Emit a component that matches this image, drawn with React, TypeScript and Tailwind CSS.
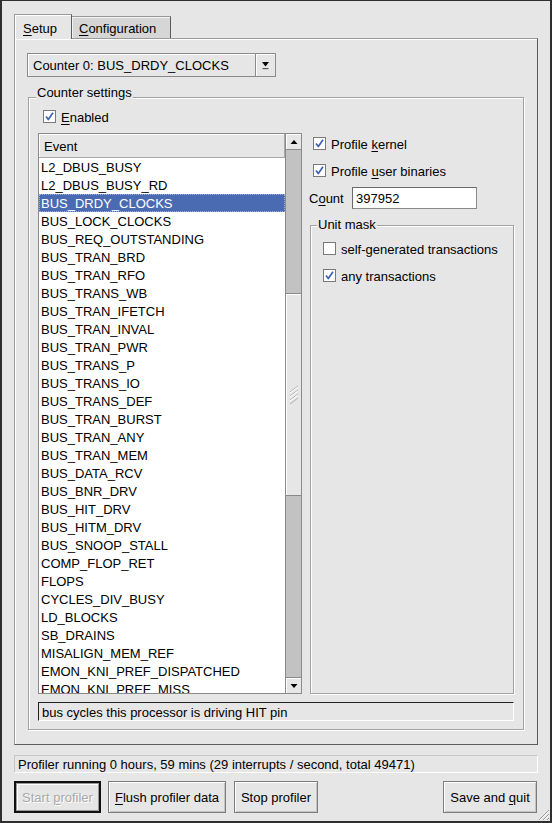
import React from "react";

const events = [
  "L2_DBUS_BUSY",
  "L2_DBUS_BUSY_RD",
  "BUS_DRDY_CLOCKS",
  "BUS_LOCK_CLOCKS",
  "BUS_REQ_OUTSTANDING",
  "BUS_TRAN_BRD",
  "BUS_TRAN_RFO",
  "BUS_TRANS_WB",
  "BUS_TRAN_IFETCH",
  "BUS_TRAN_INVAL",
  "BUS_TRAN_PWR",
  "BUS_TRANS_P",
  "BUS_TRANS_IO",
  "BUS_TRANS_DEF",
  "BUS_TRAN_BURST",
  "BUS_TRAN_ANY",
  "BUS_TRAN_MEM",
  "BUS_DATA_RCV",
  "BUS_BNR_DRV",
  "BUS_HIT_DRV",
  "BUS_HITM_DRV",
  "BUS_SNOOP_STALL",
  "COMP_FLOP_RET",
  "FLOPS",
  "CYCLES_DIV_BUSY",
  "LD_BLOCKS",
  "SB_DRAINS",
  "MISALIGN_MEM_REF",
  "EMON_KNI_PREF_DISPATCHED",
  "EMON_KNI_PREF_MISS",
];

function Check({ checked }: { checked: boolean }) {
  return (
    <span className="w-[13px] h-[13px] bg-white border border-[#7a7a7a] flex items-center justify-center shrink-0">
      {checked && (
        <svg width="11" height="11" viewBox="0 0 11 11">
          <path d="M2 5.5 L4.3 8.5 L9 1.8" stroke="#3d62b3" strokeWidth="1.7" fill="none" strokeLinejoin="round" />
        </svg>
      )}
    </span>
  );
}

function U({ children }: { children: React.ReactNode }) {
  return <span className="underline underline-offset-[2px]">{children}</span>;
}

function Btn({ children, w }: { children: React.ReactNode; w: string }) {
  return (
    <div
      className={`${w} h-[32px] border border-[#7c7c7c] bg-[#e6e6e6] shadow-[inset_1px_1px_0_#ffffff,inset_-1px_-1px_0_#c4c4c4] flex items-center justify-center whitespace-nowrap`}
    >
      <span>{children}</span>
    </div>
  );
}

export default function App() {
  return (
    <div className="relative w-[552px] h-[823px] bg-[#e6e6e6] border-l-2 border-t border-r-2 border-b-2 border-[#2e2e2e] flex flex-col pl-[12px] pr-[12px] pt-[13px] text-black text-[13px] leading-[15px] [font-family:'Liberation_Sans',Arial,sans-serif]">
      {/* Notebook */}
      <div className="flex flex-col">
        <div className="flex h-[24px] items-start">
          <div className="relative z-10 w-[58px] h-[25px] border-l border-t border-r border-l-[#9a9a9a] border-t-[#9a9a9a] border-r-[#5c5c5c] bg-[#e6e6e6] shadow-[inset_1px_1px_0_#ffffff] pl-[8px] pt-[6px]">
            <U>S</U>etup
          </div>
          <div className="mt-[2px] w-[99px] h-[22px] border-t border-r border-t-[#9a9a9a] border-r-[#5c5c5c] bg-[#d6d6d6] shadow-[inset_1px_1px_0_#f2f2f2] pl-[7px] pt-[4px]">
            <U>C</U>onfiguration
          </div>
        </div>
        <div className="h-[707px] border border-l-[#9a9a9a] border-t-[#9a9a9a] border-r-[#5c5c5c] border-b-[#5c5c5c] shadow-[inset_1px_1px_0_#ffffff] pl-[12px] pt-[14px]">
          {/* Option menu */}
          <div className="w-[249px] h-[24px] border border-[#8a8a8a] bg-[#e6e6e6] shadow-[inset_1px_1px_0_#ffffff] flex items-center">
            <div className="flex-1 pl-[5px] pt-[1px] whitespace-nowrap">Counter 0: BUS_DRDY_CLOCKS</div>
            <div className="w-[20px] h-full border-l border-[#8a8a8a] shadow-[inset_1px_0_0_#ffffff] flex items-center justify-center">
              <svg width="9" height="12" viewBox="0 0 9 12">
                <path d="M1 3 L8 3 L4.5 7.5 Z" fill="#000" />
                <rect x="1.5" y="9" width="6" height="1.2" fill="#555" />
              </svg>
            </div>
          </div>

          {/* Counter settings frame */}
          <div className="relative mt-[20px] ml-[1px] w-[496px] h-[633px] border border-[#a2a2a2] shadow-[1px_1px_0_#ffffff,inset_1px_1px_0_#ffffff]">
            <span className="absolute left-[7px] top-[-13px] px-[1px] bg-[#e6e6e6] leading-[15px] whitespace-nowrap">
              Counter settings
            </span>
            <div className="mt-[12px] ml-[14px] h-[13px] flex items-center gap-[5px]">
              <Check checked />
              <span className="pt-[1px]">
                <U>E</U>nabled
              </span>
            </div>
            <div className="mt-[10px] ml-[9px] flex">
              {/* List */}
              <div className="w-[264px] h-[561px] border border-[#8a8a8a] flex bg-white">
                <div className="w-[246px] flex flex-col overflow-hidden">
                  <div className="h-[24px] shrink-0 bg-[#e6e6e6] border-b border-r border-[#a8a8a8] shadow-[inset_1px_1px_0_#ffffff] flex items-center pl-[5px] pt-[1px]">
                    Event
                  </div>
                  {events.map((e, i) => (
                    <div
                      key={e}
                      className={`h-[18px] shrink-0 leading-[17px] pt-[1px] pl-[2px] whitespace-nowrap ${
                        i === 2
                          ? "bg-[#4a6bb1] text-white outline-1 outline-dotted outline-[#9fb1dc] -outline-offset-1"
                          : ""
                      }`}
                    >
                      {e}
                    </div>
                  ))}
                </div>
                <div className="w-[16px] flex flex-col border-l border-[#8a8a8a] bg-[#c2c2c2]">
                  <div className="h-[16px] shrink-0 bg-[#e6e6e6] border-b border-[#8a8a8a] shadow-[inset_1px_1px_0_#ffffff] flex items-center justify-center">
                    <svg width="8" height="6" viewBox="0 0 8 6">
                      <path d="M0.5 5 L7.5 5 L4 1 Z" fill="#000" />
                    </svg>
                  </div>
                  <div className="flex-1 flex flex-col">
                    <div className="h-[143px] shrink-0" />
                    <div className="h-[203px] shrink-0 bg-[#e6e6e6] border-t border-b border-[#8a8a8a] shadow-[inset_1px_1px_0_#ffffff] flex items-center justify-center">
                      <svg width="10" height="20" viewBox="0 0 10 20">
                        <path d="M1 7 L9 1 M1 11 L9 5 M1 15 L9 9 M1 19 L9 13" stroke="#b0b0b0" strokeWidth="1" />
                        <path d="M1 8 L9 2 M1 12 L9 6 M1 16 L9 10" stroke="#ffffff" strokeWidth="1" />
                      </svg>
                    </div>
                    <div className="flex-1" />
                  </div>
                  <div className="h-[16px] shrink-0 bg-[#e6e6e6] border-t border-[#8a8a8a] shadow-[inset_1px_1px_0_#ffffff] flex items-center justify-center">
                    <svg width="8" height="6" viewBox="0 0 8 6">
                      <path d="M0.5 1 L7.5 1 L4 5 Z" fill="#000" />
                    </svg>
                  </div>
                </div>
              </div>

              {/* Right column */}
              <div className="ml-[7px] w-[205px] flex flex-col">
                <div className="mt-[4px] ml-[4px] h-[13px] flex items-center gap-[5px]">
                  <Check checked />
                  <span className="whitespace-nowrap pt-[1px]">
                    Profile <U>k</U>ernel
                  </span>
                </div>
                <div className="mt-[14px] ml-[4px] h-[13px] flex items-center gap-[5px]">
                  <Check checked />
                  <span className="whitespace-nowrap pt-[1px]">
                    Profile <U>u</U>ser binaries
                  </span>
                </div>
                <div className="mt-[10px] h-[22px] flex items-center">
                  <span className="w-[43px] pt-[1px]">
                    C<U>o</U>unt
                  </span>
                  <div className="w-[125px] h-[22px] bg-white border border-[#8a8a8a] border-t-[#6a6a6a] border-l-[#6a6a6a] flex items-center pl-[3px] pt-[1px]">
                    397952
                  </div>
                </div>
                <div className="relative mt-[16px] ml-[1px] w-[204px] h-[469px] border border-[#a2a2a2] shadow-[1px_1px_0_#ffffff,inset_1px_1px_0_#ffffff]">
                  <span className="absolute left-[6px] top-[-9px] px-[1px] bg-[#e6e6e6] leading-[15px] whitespace-nowrap">
                    Unit mask
                  </span>
                  <div className="mt-[16px] ml-[12px] h-[13px] flex items-center gap-[5px]">
                    <Check checked={false} />
                    <span className="whitespace-nowrap pt-[1px]">self-generated transactions</span>
                  </div>
                  <div className="mt-[14px] ml-[12px] h-[13px] flex items-center gap-[5px]">
                    <Check checked />
                    <span className="whitespace-nowrap pt-[1px]">any transactions</span>
                  </div>
                </div>
              </div>
            </div>
            {/* Description */}
            <div className="mt-[8px] ml-[9px] w-[476px] h-[19px] border border-t-[#222] border-l-[#222] border-r-white border-b-white flex items-center pl-[3px] pt-[1px] whitespace-nowrap">
              bus cycles this processor is driving HIT pin
            </div>
          </div>
        </div>
      </div>

      {/* Status bar */}
      <div className="mt-[10px] h-[18px] border border-t-[#c6c6c6] border-l-[#c6c6c6] border-r-white border-b-white flex items-center pl-[3px] pt-[1px] whitespace-nowrap">
        Profiler running 0 hours, 59 mins (29 interrupts / second, total 49471)
      </div>

      {/* Buttons */}
      <div className="mt-[8px] flex items-center">
        <div className="w-[87px] h-[32px] border-2 border-[#111] flex">
          <div className="flex-1 border border-[#9a9a9a] bg-[#e6e6e6] shadow-[inset_1px_1px_0_#ffffff] flex items-center justify-center whitespace-nowrap text-[#a9a9a9] [text-shadow:1px_1px_0_#ffffff]">
            <span>
              Start <U>p</U>rofiler
            </span>
          </div>
        </div>
        <Btn w="w-[118px] ml-[7px]">
          <U>F</U>lush profiler data
        </Btn>
        <Btn w="w-[84px] ml-[8px]">Stop profiler</Btn>
        <Btn w="w-[94px] ml-auto mr-[1px]">
          Save and <U>q</U>uit
        </Btn>
      </div>

      {/* Resize grip */}
      <svg className="absolute right-0 bottom-0" width="14" height="14" viewBox="0 0 14 14">
        <path d="M13 3 L3 13 M13 7 L7 13 M13 11 L11 13" stroke="#9a9a9a" strokeWidth="1" />
        <path d="M13 4 L4 13 M13 8 L8 13 M13 12 L12 13" stroke="#ffffff" strokeWidth="1" />
      </svg>
    </div>
  );
}
